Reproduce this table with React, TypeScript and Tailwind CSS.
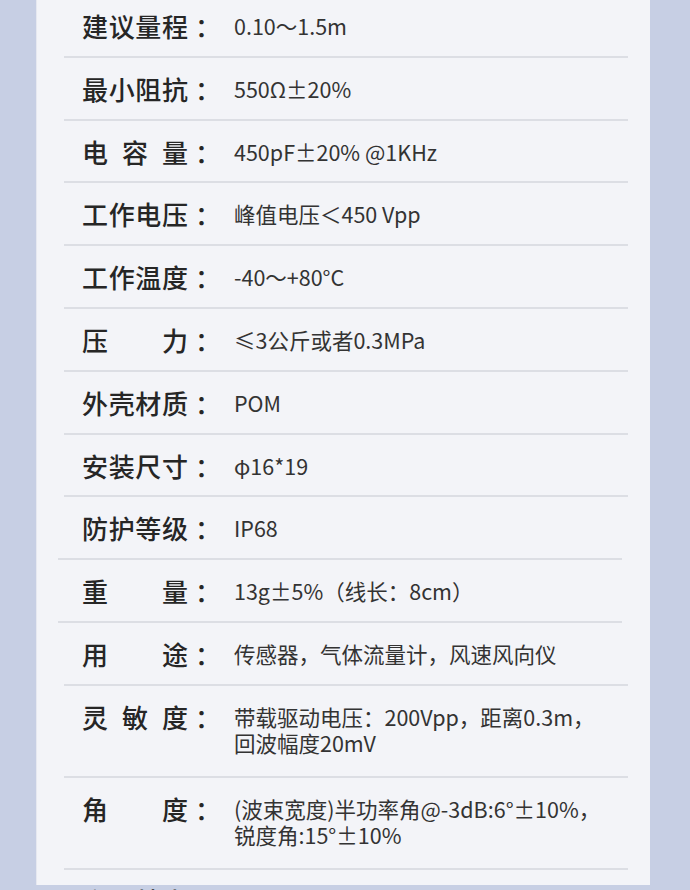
import React from 'react';

type Spec = {
  label: string[];
  value: string[];
  shiftLine?: boolean;
};

const SPECS: Spec[] = [
  { label: ['建', '议', '量', '程'], value: ['0.10～1.5m'] },
  { label: ['最', '小', '阻', '抗'], value: ['550Ω±20%'] },
  { label: ['电', '容', '量'], value: ['450pF±20% @1KHz'] },
  { label: ['工', '作', '电', '压'], value: ['峰值电压＜450 Vpp'] },
  { label: ['工', '作', '温', '度'], value: ['-40～+80°C'] },
  { label: ['压', '力'], value: ['≤3公斤或者0.3MPa'] },
  { label: ['外', '壳', '材', '质'], value: ['POM'] },
  { label: ['安', '装', '尺', '寸'], value: ['φ16*19'] },
  { label: ['防', '护', '等', '级'], value: ['IP68'], shiftLine: true },
  { label: ['重', '量'], value: ['13g±5%（线长：8cm）'], shiftLine: true },
  { label: ['用', '途'], value: ['传感器，气体流量计，风速风向仪'] },
  { label: ['灵', '敏', '度'], value: ['带载驱动电压：200Vpp，距离0.3m，', '回波幅度20mV'] },
  { label: ['角', '度'], value: ['(波束宽度)半功率角@-3dB:6°±10%，', '锐度角:15°±10%'] },
  { label: ['产', '品', '特', '点'], value: [''] },
];

const FONT = '"Noto Sans CJK SC", "Noto Sans", sans-serif';

function Row({ spec }: { spec: Spec }) {
  const multi = spec.value.length > 1;
  return (
    <div>
      <div className={`flex items-start pl-[18px] pt-[15px] ${multi ? 'pb-[20px]' : 'pb-[14.8px]'}`}>
        <div className="flex items-center shrink-0 w-[152px] text-[26px] leading-[31px] font-medium text-[#262626]">
          <div className="flex justify-between shrink-0 w-[106px]">
            {spec.label.map((c, i) => <span key={i}>{c}</span>)}
          </div>
          <span className="ml-[7px]">：</span>
        </div>
        <div className="pt-[3px] text-[21.5px] leading-[26px] text-[#333333] whitespace-nowrap">
          {spec.value.map((v, i) => <div key={i}>{v}</div>)}
        </div>
      </div>
      <div className={`h-[2px] bg-[#dcdee4] ${spec.shiftLine ? '-ml-[6px] mr-[7px]' : 'mr-[1px]'}`} />
    </div>
  );
}

export default function App() {
  return (
    <div className="w-[690px] h-[890px] overflow-hidden bg-[#c7cfe4]" style={{ fontFamily: FONT }}>
      <div className="ml-[36px] w-[614px] h-full bg-[#f3f4f8] border-l border-[#e6e8f0] pl-[27px] pr-[21px]">
        <div className="-mt-[5px]">
          {SPECS.map((s, i) => <Row key={i} spec={s} />)}
        </div>
      </div>
    </div>
  );
}
